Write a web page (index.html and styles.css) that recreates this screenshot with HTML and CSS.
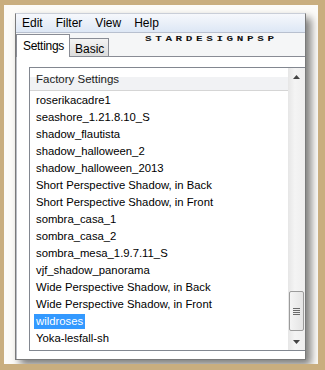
FILE: index.html
```html
<!DOCTYPE html>
<html>
<head>
<meta charset="utf-8">
<link rel="stylesheet" href="styles.css">
</head>
<body>
<div class="frame">
  <div class="window">
    <div class="menubar">
      <span class="menu edit">Edit</span>
      <span class="menu">Filter</span>
      <span class="menu">View</span>
      <span class="menu">Help</span>
    </div>
    <div class="tabstrip">
      <div class="tab active">Settings</div>
      <div class="tab">Basic</div>
      <div class="watermark">STARDESIGNPSP</div>
    </div>
    <div class="panel">
      <div class="listbox">
        <div class="listmain">
          <div class="header">Factory Settings</div>
          <ul class="items">
            <li><span>roserikacadre1</span></li>
            <li><span>seashore_1.21.8.10_S</span></li>
            <li><span>shadow_flautista</span></li>
            <li><span>shadow_halloween_2</span></li>
            <li><span>shadow_halloween_2013</span></li>
            <li><span>Short Perspective Shadow, in Back</span></li>
            <li><span>Short Perspective Shadow, in Front</span></li>
            <li><span>sombra_casa_1</span></li>
            <li><span>sombra_casa_2</span></li>
            <li><span>sombra_mesa_1.9.7.11_S</span></li>
            <li><span>vjf_shadow_panorama</span></li>
            <li><span>Wide Perspective Shadow, in Back</span></li>
            <li><span>Wide Perspective Shadow, in Front</span></li>
            <li class="selected"><span>wildroses</span></li>
            <li><span>Yoka-lesfall-sh</span></li>
          </ul>
        </div>
        <div class="scrollbar">
          <div class="sbtn"><svg width="7" height="4" viewBox="0 0 7 4"><path d="M0 4 L3.5 0 L7 4 Z" fill="#444"/></svg></div>
          <div class="track">
            <div class="thumb">
              <div class="grip"></div>
              <div class="grip"></div>
              <div class="grip"></div>
              <div class="grip"></div>
            </div>
          </div>
          <div class="sbtn"><svg width="7" height="4" viewBox="0 0 7 4"><path d="M0 0 L7 0 L3.5 4 Z" fill="#444"/></svg></div>
        </div>
      </div>
    </div>
  </div>
</div>
</body>
</html>
```
FILE: styles.css
```css
html, body {
  margin: 0;
  padding: 0;
  background: #fff;
}
.frame {
  width: 325px;
  height: 370px;
  box-sizing: border-box;
  border-style: solid;
  border-color: #c9ae7f;
  border-width: 5px 7px 6px 4px;
  background: #fcfbf8;
  padding: 8px 0 0 11px;
  overflow: hidden;
  font-family: "Liberation Sans", Arial, sans-serif;
}
.window {
  width: 291px;
  height: 347px;
  box-sizing: border-box;
  border: 1px solid #7a7a7a;
  border-top-color: #c9ced8;
  background: #f0f0f0;
  box-shadow: 5px 5px 8px rgba(0, 0, 0, 0.5);
  display: flex;
  flex-direction: column;
  overflow: hidden;
}
.menubar {
  height: 18px;
  flex: none;
  background: linear-gradient(#f6f8fc, #dde7f5);
  border-bottom: 1px solid #b8c0cf;
  display: flex;
  align-items: center;
  font-size: 12px;
  color: #000;
}
.menu {
  margin-right: 13px;
}
.menu.edit {
  margin-left: 6px;
}
.tabstrip {
  height: 23px;
  flex: none;
  display: flex;
  align-items: flex-end;
  background: #f5f6f7;
  position: relative;
}
.tab {
  box-sizing: border-box;
  border: 1px solid #898c95;
  border-bottom: none;
  font-size: 12px;
  color: #000;
}
.tab.active {
  width: 54px;
  height: 23px;
  padding: 4px 0 0 6px;
  background: #fff;
  margin-bottom: -1px;
  position: relative;
  z-index: 1;
  letter-spacing: -0.3px;
}
.tab:not(.active) {
  width: 39px;
  height: 18px;
  border-left: none;
  padding: 3px 0 0 5px;
  background: linear-gradient(#f3f3f3, #dcdcdc);
}
.watermark {
  position: absolute;
  left: 129px;
  top: 2px;
  font-family: "Liberation Mono", monospace;
  font-weight: bold;
  font-size: 11px;
  letter-spacing: 3.6px;
  color: #111;
  transform: scaleY(0.68);
  transform-origin: left top;
}
.panel {
  flex: 1;
  background: #fff;
  border-top: 1px solid #898c95;
  border-left: 1px solid #b9bcc3;
  padding: 10px 0 0 12px;
}
.listbox {
  height: 284px;
  box-sizing: border-box;
  border: 1px solid #828790;
  border-right: none;
  display: flex;
  background: #fff;
}
.listmain {
  flex: 1;
}
.header {
  height: 22px;
  border-bottom: 1px solid #d5d5d5;
  background: linear-gradient(#ffffff 40%, #f1f2f4 40%);
  font-size: 11.5px;
  line-height: 23px;
  padding-left: 6px;
  color: #222;
}
.items {
  list-style: none;
  margin: 0;
  padding: 1px 0 0 4px;
  font-size: 11.3px;
  color: #000;
}
.items li {
  height: 17px;
  line-height: 17px;
}
.items li span {
  display: inline-block;
  padding: 0 2px;
  line-height: 15px;
  margin-top: 1px;
  vertical-align: top;
}
.items li.selected span {
  background: #3399ff;
  color: #fff;
}
.scrollbar {
  width: 17px;
  display: flex;
  flex-direction: column;
  background: linear-gradient(90deg, #e6e6e6, #f4f4f4 40%, #eeeeee);
}
.sbtn {
  height: 17px;
  flex: none;
  display: flex;
  align-items: center;
  justify-content: center;
}
.track {
  flex: 1;
  display: flex;
  flex-direction: column;
  justify-content: flex-end;
  padding: 0 1px 2px 1px;
}
.thumb {
  height: 40px;
  box-sizing: border-box;
  border: 1px solid #9b9b9b;
  border-radius: 2px;
  background: linear-gradient(90deg, #f4f4f4, #e4e4e4);
  display: flex;
  flex-direction: column;
  align-items: center;
  justify-content: center;
  gap: 1px;
}
.grip {
  width: 7px;
  height: 1px;
  background: #6a6a6a;
}
```
